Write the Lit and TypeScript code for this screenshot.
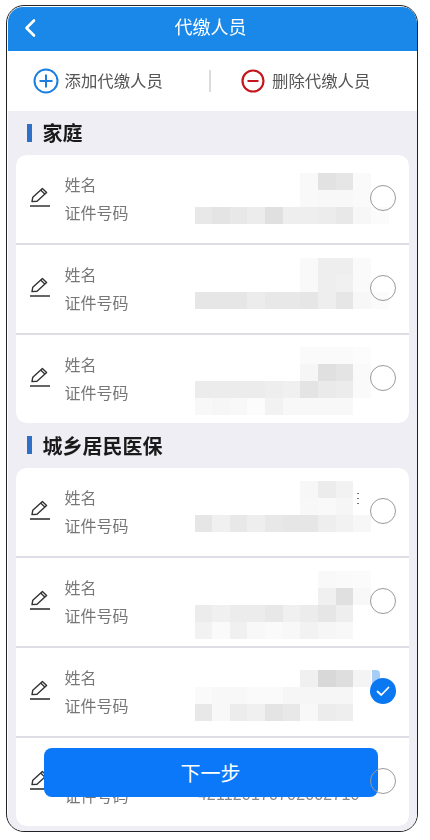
import { LitElement, html, css, svg } from "lit";
import { customElement } from "lit/decorators.js";

type Person = {
  top: number;
  cells: number[][];
  checked?: boolean;
  smear?: boolean;
  idNumber?: string;
  specks?: boolean;
};

const FAMILY: Person[] = [
  {
    top: 18,
    cells: [
      [0, 0, 0, 0, 0, 0, 249, 226, 230, 250],
      [0, 0, 0, 0, 0, 0, 249, 248, 248, 250],
      [232, 228, 232, 236, 224, 238, 238, 236, 232, 247, 251],
    ],
  },
  {
    top: 13,
    cells: [
      [0, 0, 0, 0, 0, 0, 249, 238, 238, 250],
      [0, 0, 0, 0, 0, 0, 249, 238, 240, 250],
      [230, 230, 230, 236, 232, 232, 230, 238, 230, 247, 251],
    ],
  },
  {
    top: 12,
    cells: [
      [0, 0, 0, 0, 0, 0, 250, 250, 250, 252],
      [0, 0, 0, 0, 0, 0, 246, 224, 228, 250],
      [236, 236, 236, 236, 238, 240, 228, 234, 236, 250],
      [248, 246, 248, 252, 242, 248, 248, 248, 248],
    ],
  },
];

const RESIDENTS: Person[] = [
  {
    top: 13,
    specks: true,
    cells: [
      [0, 0, 0, 0, 0, 0, 247, 236, 242, 0],
      [0, 0, 0, 0, 0, 0, 248, 249, 246, 0],
      [230, 240, 232, 238, 232, 230, 230, 238, 242, 247],
    ],
  },
  {
    top: 13,
    cells: [
      [0, 0, 0, 0, 0, 0, 0, 249, 250, 251],
      [0, 0, 0, 0, 0, 0, 0, 240, 224, 248],
      [236, 240, 236, 236, 232, 240, 236, 230, 238],
      [242, 250, 240, 248, 250, 248, 242, 246, 248],
    ],
  },
  {
    top: 22,
    checked: true,
    smear: true,
    cells: [
      [0, 0, 0, 0, 0, 0, 240, 216, 222, 244],
      [250, 248, 248, 250, 250, 246, 246, 246, 246],
      [232, 248, 236, 240, 228, 232, 248, 236, 238],
    ],
  },
  {
    top: 0,
    cells: [],
    idNumber: "421120170702002710",
  },
];

const CELL = 17.67;

@customElement("person-row")
class PersonRow extends LitElement {
  static properties = { person: { attribute: false } };
  declare person: Person;

  static styles = css`
    :host {
      display: block;
      position: relative;
      height: 88px;
      background: #fff;
      color: #777;
      font-size: 16px;
    }
    .row {
      display: flex;
      align-items: center;
      height: 100%;
      padding: 0 9px 0 13px;
      box-sizing: border-box;
    }
    .pencil {
      flex: none;
      width: 22px;
      height: 22px;
      margin: 0 14px 3px 0;
      color: #333;
    }
    .info {
      flex: 1;
      display: flex;
      flex-direction: column;
      gap: 6px;
      padding: 0 10px 2px 0;
      min-width: 0;
    }
    .line {
      display: flex;
      justify-content: space-between;
      height: 22px;
      line-height: 22px;
    }
    .number {
      font-family: "Liberation Sans", sans-serif;
      color: #888;
      letter-spacing: 0.15px;
    }
    .radio {
      flex: none;
      width: 26px;
      height: 26px;
      margin: 0 4px 2px 0;
      border: 1.2px solid #9a9a9a;
      border-radius: 50%;
      box-sizing: border-box;
      position: relative;
      z-index: 1;
    }
    .radio.checked {
      border: none;
      background: #0a78f0;
      display: flex;
      align-items: center;
      justify-content: center;
    }
    .radio svg {
      width: 16px;
      height: 16px;
    }
    .mosaic {
      position: absolute;
      left: 179px;
      display: grid;
    }
    .smear {
      position: absolute;
      left: 356px;
      top: 22px;
      width: 8px;
      height: 18px;
      background: #a6cdf8;
      border-radius: 0 4px 0 0;
    }
    .specks {
      position: absolute;
      left: 341px;
      top: 23px;
      width: 2px;
      height: 14px;
      background: radial-gradient(circle, #777 0.7px, transparent 1px) 0 0 / 2px 5px;
    }
  `;

  render() {
    const p = this.person;
    return html`
      <div class="row">
        <svg class="pencil" viewBox="0 0 22 22" fill="none" stroke="currentColor" stroke-width="1.4" stroke-linejoin="round">
          ${svg`<path d="M3 15.6 L3.8 11.2 L13.4 2.4 L17.6 6.4 L8 15.2 Z"/>
          <path d="M11.6 4 L15.8 8"/>
          <path d="M1 20 H21" stroke-width="1.6"/>`}
        </svg>
        <div class="info">
          <div class="line"><span>姓名</span></div>
          <div class="line"><span>证件号码</span>${p.idNumber ? html`<span class="number">${p.idNumber}</span>` : ""}</div>
        </div>
        ${p.checked
          ? html`<div class="radio checked">
              <svg viewBox="0 0 16 16" fill="none" stroke="#fff" stroke-width="1.8" stroke-linecap="round" stroke-linejoin="round"><path d="M2.5 8.5 L6.3 12 L13.5 4.5"/></svg>
            </div>`
          : html`<div class="radio"></div>`}
      </div>
      ${p.cells.length
        ? html`<div
            class="mosaic"
            style="top:${p.top}px;grid-template-columns:repeat(11,${CELL}px);grid-auto-rows:${CELL - 0.5}px"
          >
            ${p.cells.flatMap((r) => {
              const full = [...r, ...Array(11 - r.length).fill(0)];
              return full.map((g) =>
                g ? html`<div style="background:rgb(${g},${g},${g})"></div>` : html`<div></div>`
              );
            })}
          </div>`
        : ""}
      ${p.smear ? html`<div class="smear"></div>` : ""}
      ${p.specks ? html`<div class="specks"></div>` : ""}
    `;
  }
}

@customElement("app-root")
class AppRoot extends LitElement {
  static styles = css`
    :host {
      display: block;
      width: 430px;
      height: 840px;
      background: #fff;
      font-family: "Noto Sans CJK SC", "Noto Sans", sans-serif;
      overflow: hidden;
    }
    .frame {
      position: relative;
      margin: 5px 0 0 6px;
      width: 412px;
      height: 827px;
      box-sizing: border-box;
      border: 1.5px solid #222;
      border-radius: 18px;
      padding: 0.5px;
      overflow: hidden;
      background: #fff;
    }
    .screen {
      height: 100%;
      display: flex;
      flex-direction: column;
      background: #eeeef4;
      border-radius: 15px;
      overflow: hidden;
      filter: blur(0.35px);
      position: relative;
    }
    header {
      flex: none;
      height: 44px;
      background: #1a88e8;
      color: #fff;
      font-size: 18px;
      position: relative;
      display: flex;
      align-items: center;
      justify-content: center;
      padding: 0 3px 6px 0;
      box-sizing: border-box;
    }
    .back {
      position: absolute;
      left: 15px;
      top: 11px;
      width: 14px;
      height: 20px;
    }
    .toolbar {
      flex: none;
      height: 60px;
      background: #fff;
      display: flex;
      align-items: center;
      color: #555;
      font-size: 16.4px;
    }
    .tool {
      flex: 1;
      display: flex;
      align-items: center;
      gap: 6px;
      padding-left: 25px;
      line-height: 26px;
    }
    .tool span {
      padding-bottom: 2px;
    }
    .tool.remove {
      padding-left: 29px;
    }
    .tool svg {
      width: 26px;
      height: 26px;
      flex: none;
    }
    .divider {
      width: 2px;
      height: 22px;
      background: #dcdcdc;
    }
    .content {
      flex: 1;
      padding: 0 8px;
      min-height: 0;
    }
    .title {
      display: flex;
      align-items: center;
      gap: 11px;
      height: 44px;
      padding-left: 11px;
      font-size: 20px;
      font-weight: 700;
      color: #1a1a1a;
    }
    .title.next {
      height: 45px;
    }
    .title i {
      width: 5px;
      height: 18px;
      background: #2f6fc8;
    }
    .card {
      display: flex;
      flex-direction: column;
      gap: 2px;
      background: #dedee6;
      border-radius: 10px;
      overflow: hidden;
    }
    .next-btn {
      position: absolute;
      left: 36px;
      top: 741px;
      width: 334px;
      height: 49px;
      border-radius: 8px;
      background: #0a78f8;
      color: #fff;
      font-size: 20px;
      display: flex;
      align-items: center;
      justify-content: center;
    }
  `;

  private group(list: Person[]) {
    return html`<div class="card">
      ${list.map((p) => html`<person-row .person=${p}></person-row>`)}
    </div>`;
  }

  render() {
    return html`
      <div class="frame">
        <div class="screen">
          <header>
            <svg class="back" viewBox="0 0 14 20" fill="none" stroke="#fff" stroke-width="2.6" stroke-linecap="round" stroke-linejoin="round">
              <path d="M11 2.5 L3.5 10 L11 17.5" />
            </svg>
            代缴人员
          </header>
          <div class="toolbar">
            <div class="tool">
              <svg viewBox="0 0 26 26" fill="none" stroke="#1a7fe0" stroke-width="2">
                <circle cx="13" cy="13" r="11.5" />
                <path d="M6.5 13 H19.5 M13 6.5 V19.5" />
              </svg>
              <span>添加代缴人员</span>
            </div>
            <div class="divider"></div>
            <div class="tool remove">
              <svg viewBox="0 0 26 26" fill="none" stroke="#c4161c" stroke-width="2.2">
                <circle cx="13" cy="13" r="10.5" />
                <path d="M7.5 13 H18.5" />
              </svg>
              <span>删除代缴人员</span>
            </div>
          </div>
          <div class="content">
            <div class="title"><i></i>家庭</div>
            ${this.group(FAMILY)}
            <div class="title next"><i></i>城乡居民医保</div>
            ${this.group(RESIDENTS)}
          </div>
          <div class="next-btn">下一步</div>
        </div>
      </div>
    `;
  }
}
